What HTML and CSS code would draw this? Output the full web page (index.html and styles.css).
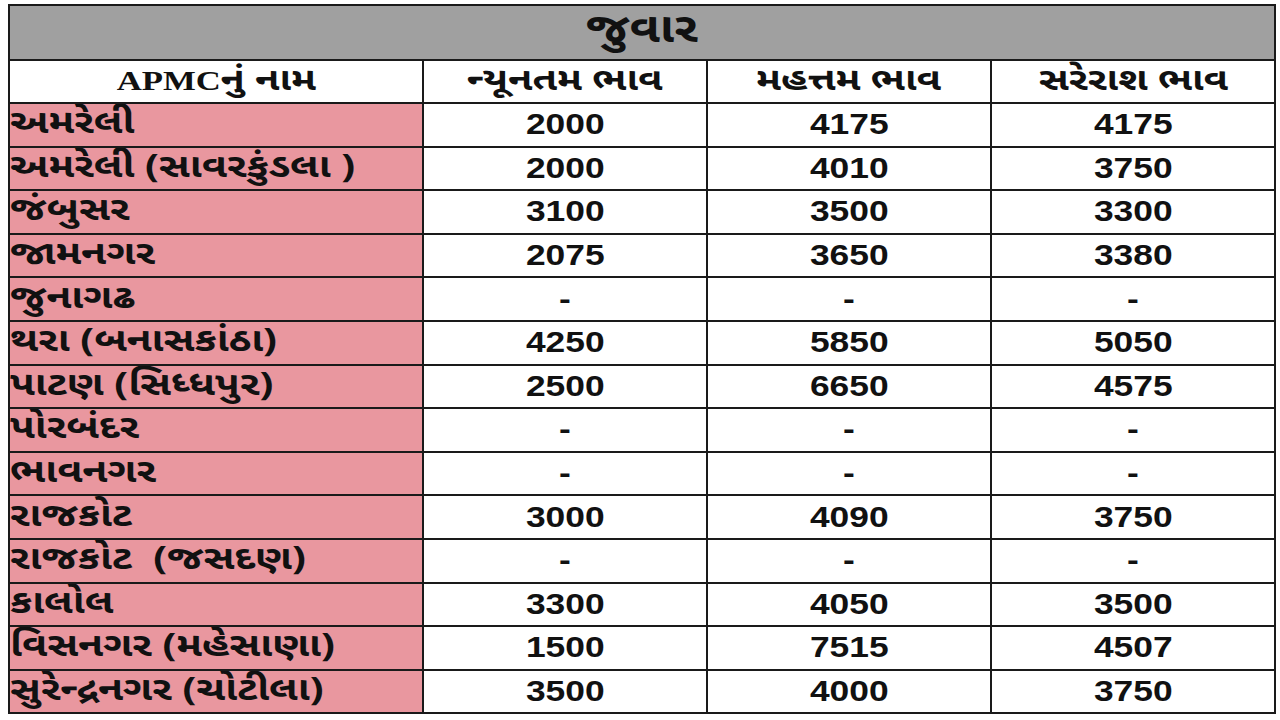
FILE: index.html
```html
<!DOCTYPE html>
<html lang="gu">
<head>
<meta charset="utf-8">
<title>જુવાર</title>
<link rel="stylesheet" href="styles.css">
</head>
<body>
<div class="sheet">
<table class="prices">
<colgroup>
<col class="c-name"><col class="c-val"><col class="c-val"><col class="c-val">
</colgroup>
<thead>
<tr class="title-row"><th colspan="4" class="title"><span>જુવાર</span></th></tr>
<tr class="head-row">
<th class="head"><span><b class="latin">APMC</b>નું નામ</span></th>
<th class="head"><span>ન્યૂનતમ ભાવ</span></th>
<th class="head"><span>મહત્તમ ભાવ</span></th>
<th class="head"><span>સરેરાશ ભાવ</span></th>
</tr>
</thead>
<tbody>
<tr><td class="name"><span>અમરેલી</span></td><td class="num"><span>2000</span></td><td class="num"><span>4175</span></td><td class="num"><span>4175</span></td></tr>
<tr><td class="name"><span>અમરેલી (સાવરકુંડલા )</span></td><td class="num"><span>2000</span></td><td class="num"><span>4010</span></td><td class="num"><span>3750</span></td></tr>
<tr><td class="name"><span>જંબુસર</span></td><td class="num"><span>3100</span></td><td class="num"><span>3500</span></td><td class="num"><span>3300</span></td></tr>
<tr><td class="name"><span>જામનગર</span></td><td class="num"><span>2075</span></td><td class="num"><span>3650</span></td><td class="num"><span>3380</span></td></tr>
<tr><td class="name"><span>જુનાગઢ</span></td><td class="num"><span>-</span></td><td class="num"><span>-</span></td><td class="num"><span>-</span></td></tr>
<tr><td class="name"><span>થરા (બનાસકાંઠા)</span></td><td class="num"><span>4250</span></td><td class="num"><span>5850</span></td><td class="num"><span>5050</span></td></tr>
<tr><td class="name"><span>પાટણ (સિધ્ધપુર)</span></td><td class="num"><span>2500</span></td><td class="num"><span>6650</span></td><td class="num"><span>4575</span></td></tr>
<tr><td class="name"><span>પોરબંદર</span></td><td class="num"><span>-</span></td><td class="num"><span>-</span></td><td class="num"><span>-</span></td></tr>
<tr><td class="name"><span>ભાવનગર</span></td><td class="num"><span>-</span></td><td class="num"><span>-</span></td><td class="num"><span>-</span></td></tr>
<tr><td class="name"><span>રાજકોટ</span></td><td class="num"><span>3000</span></td><td class="num"><span>4090</span></td><td class="num"><span>3750</span></td></tr>
<tr><td class="name"><span>રાજકોટ&nbsp; (જસદણ)</span></td><td class="num"><span>-</span></td><td class="num"><span>-</span></td><td class="num"><span>-</span></td></tr>
<tr><td class="name"><span>કાલોલ</span></td><td class="num"><span>3300</span></td><td class="num"><span>4050</span></td><td class="num"><span>3500</span></td></tr>
<tr><td class="name"><span>વિસનગર (મહેસાણા)</span></td><td class="num"><span>1500</span></td><td class="num"><span>7515</span></td><td class="num"><span>4507</span></td></tr>
<tr><td class="name"><span>સુરેન્દ્રનગર (ચોટીલા)</span></td><td class="num"><span>3500</span></td><td class="num"><span>4000</span></td><td class="num"><span>3750</span></td></tr>
</tbody>
</table>
</div>
</body>
</html>
```
FILE: styles.css
```css
html, body {
  margin: 0;
  padding: 0;
  background: #ffffff;
}

.sheet {
  padding: 4px 0 0 8px;
}

.prices {
  border-collapse: collapse;
  table-layout: fixed;
  width: 1268px;
  color: #111111;
  font-family: "Noto Sans Gujarati", "Lohit Gujarati", "Shruti", "Noto Sans", sans-serif;
  font-weight: 700;
}

.c-name { width: 414px; }
.c-val { width: 284px; }

.prices th,
.prices td {
  border: 2px solid #1a1a1a;
  padding: 0;
  overflow: hidden;
  white-space: nowrap;
}

.prices span {
  display: inline-block;
}

.title-row { height: 55px; }

.title {
  background: #a0a0a0;
  font-size: 41px;
  text-align: center;
  line-height: 1;
}

.title span {
  transform: scaleX(1.2);
}

.head-row { height: 43px; }

.head {
  background: #ffffff;
  font-size: 32px;
  text-align: center;
  line-height: 1;
  padding-top: 3px;
}

.head span {
  transform: scaleX(1.24);
}

.latin {
  font-family: "Liberation Serif", serif;
  font-size: 28px;
  font-weight: 700;
}

.prices tbody tr { height: 43.6px; }

.name {
  background: #e9979f;
  font-size: 33px;
  text-align: left;
  padding-left: 7px;
  padding-top: 5px;
  line-height: 1;
}

.name span {
  transform: scaleX(1.24);
  transform-origin: left center;
}

.num {
  background: #ffffff;
  text-align: center;
  font-family: "Liberation Sans", Arial, sans-serif;
  font-size: 29px;
  line-height: 1;
}

.num span {
  transform: scaleX(1.22);
}
```
